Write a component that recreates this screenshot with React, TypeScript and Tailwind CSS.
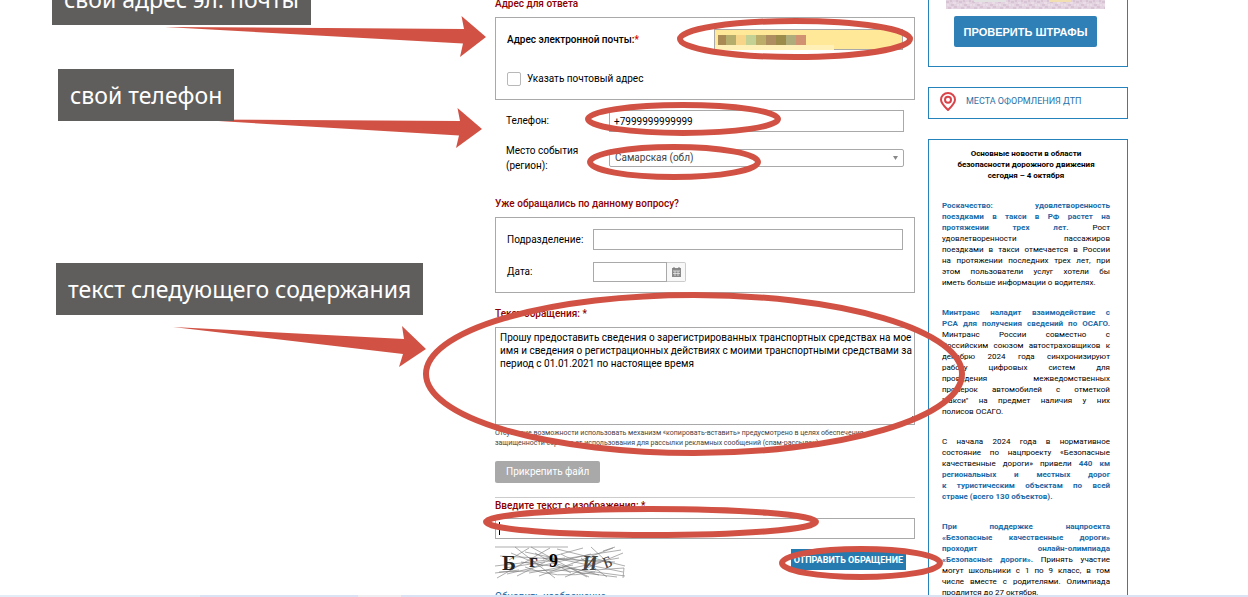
import { useState } from 'react'
import type { ReactNode } from 'react'

const fieldClass = 'border border-[#a9a9a9] bg-white px-1 outline-none'

const pixels = ['#a98a55', '#b5ad6b', '#f6d488', '#c4d194', '#bbac6a', '#ae8e60', '#9c8c4b', '#aeac7b', '#d09271']

const scratches = [
  'M0 1H73', 'M2 32L55 2', 'M20 1L60 32', 'M30 6L128 26', 'M5 10L120 16', 'M10 22L126 4',
  'M12 28L96 8', 'M36 1L92 31', 'M44 30L118 2', 'M0 20L70 12', 'M26 16L130 30', 'M62 3L130 20',
  'M4 26L64 24L122 31', 'M48 13L88 2', 'M54 27L106 16', 'M70 31L128 7', 'M16 7L48 20', 'M34 27L78 19',
  'M86 12L112 31', 'M96 1L110 14', 'M100 24L129 22L128 32', 'M40 7L76 27', 'M22 30L50 16', 'M58 17L104 29',
  'M30 21Q60 34 100 26', 'M66 8Q84 20 124 12', 'M14 14L34 2', 'M0 27L24 24', 'M76 22L94 31', 'M108 5L120 1',
]

const news: { bold: string; text: string; last?: boolean }[][] = [
  [
    { bold: 'Роскачество: удовлетворенность', text: '' },
    { bold: 'поездками в такси в РФ растет на', text: '' },
    { bold: 'протяжении трех лет.', text: ' Рост' },
    { bold: '', text: 'удовлетворенности пассажиров' },
    { bold: '', text: 'поездками в такси отмечается в России' },
    { bold: '', text: 'на протяжении последних трех лет, при' },
    { bold: '', text: 'этом пользователи услуг хотели бы' },
    { bold: '', text: 'иметь больше информации о водителях.', last: true },
  ],
  [
    { bold: 'Минтранс наладит взаимодействие с', text: '' },
    { bold: 'РСА для получения сведений по ОСАГО.', text: '' },
    { bold: '', text: 'Минтранс России совместно с' },
    { bold: '', text: 'Российским союзом автостраховщиков к' },
    { bold: '', text: 'декабрю 2024 года синхронизируют' },
    { bold: '', text: 'работу цифровых систем для' },
    { bold: '', text: 'проведения межведомственных' },
    { bold: '', text: 'проверок автомобилей с отметкой' },
    { bold: '', text: '"такси" на предмет наличия у них' },
    { bold: '', text: 'полисов ОСАГО.', last: true },
  ],
  [
    { bold: '', text: 'С начала 2024 года в нормативное' },
    { bold: '', text: 'состояние по нацпроекту «Безопасные' },
    { bold: '440 км', text: 'качественные дороги» привели ' },
    { bold: 'региональных и местных дорог', text: '' },
    { bold: 'к туристическим объектам по всей', text: '' },
    { bold: 'стране (всего 130 объектов).', text: '', last: true },
  ],
  [
    { bold: 'При поддержке нацпроекта', text: '' },
    { bold: '«Безопасные качественные дороги»', text: '' },
    { bold: 'проходит онлайн-олимпиада', text: '' },
    { bold: '«Безопасные дороги».', text: ' Принять участие' },
    { bold: '', text: 'могут школьники с 1 по 9 класс, в том' },
    { bold: '', text: 'числе вместе с родителями. Олимпиада' },
    { bold: '', text: 'продлится до 27 октября.', last: true },
  ],
]

function Callout({ children }: { children: ReactNode }) {
  return (
    <p className="relative z-10 w-fit whitespace-nowrap bg-[#5f5e5c] px-3 py-2 font-['Noto_Sans',sans-serif] text-[23px] leading-9 text-white">
      {children}
    </p>
  )
}

function Heading({ htmlFor, children }: { htmlFor?: string; children: ReactNode }) {
  return (
    <label htmlFor={htmlFor} className="block font-medium leading-4 text-[#8b0000]">
      {children}
    </label>
  )
}

function Captcha() {
  return (
    <svg width="132" height="34" viewBox="0 0 132 34" role="img" aria-label="Код">
      <g fill="none" stroke="#777" strokeWidth="0.6">
        {scratches.map((d) => (
          <path key={d} d={d} />
        ))}
      </g>
      <g fontFamily="Liberation Serif, serif" fill="#222">
        <text x="7" y="24" fontSize="21" fontWeight="bold">Б</text>
        <text x="34" y="21" fontSize="19" fontWeight="bold">г</text>
        <text x="54" y="21" fontSize="18" fontWeight="bold" fill="#000">9</text>
        <text x="87" y="24" fontSize="20" fontStyle="italic" fontWeight="bold" fill="#444">И</text>
        <text x="108" y="21" fontSize="16" fill="#444" transform="rotate(-20 114 16)">Б</text>
      </g>
    </svg>
  )
}

function Marks() {
  return (
    <svg className="pointer-events-none absolute left-0 top-0" width="1248" height="597" viewBox="0 0 1248 597" aria-hidden="true">
      <g fill="#d15244">
        <path d="M165 27L464 29L461.500 16L486 37L460 57L463 43.500Z" />
        <path d="M193 119.500L460 121L457.500 108L482 129L456 148L459 135.500Z" />
        <path d="M173 327L404 339L402 326L426 349L399 367L403 354Z" />
      </g>
      <g fill="none" stroke="#d15244" strokeWidth="6">
        <ellipse cx="795" cy="39" rx="115" ry="18" />
        <ellipse cx="683" cy="119" rx="95" ry="14" />
        <ellipse cx="674" cy="162" rx="84" ry="15" />
        <ellipse cx="694" cy="374" rx="268" ry="79" />
        <ellipse cx="651" cy="522" rx="165" ry="13" />
        <ellipse cx="861" cy="563" rx="79" ry="14" />
      </g>
    </svg>
  )
}

function RequestForm() {
  const [phone, setPhone] = useState('+7999999999999')
  const [code, setCode] = useState('')
  const [text, setText] = useState(
    'Прошу предоставить сведения о зарегистрированных транспортных средствах на мое\nимя и сведения о регистрационных действиях с моими транспортными средствами за\nпериод с 01.01.2021 по настоящее время'
  )

  return (
    <form className="-mt-1 min-w-0 flex-1" onSubmit={(e) => e.preventDefault()}>
      <Heading>Адрес для ответа</Heading>
      <div className="mt-[5px] border border-[#a9a9a9] px-[11px] pb-3 pt-[11px]">
        <div className="flex items-center justify-between">
          <label htmlFor="email" className="font-medium">
            Адрес электронной почты:<span className="text-[#d00]">*</span>
          </label>
          <div className="relative">
            <input id="email" type="email" className="block h-[21px] w-[189px] border border-[#a9a9a9] bg-[#ffe998] px-1 outline-none" />
            <svg className="absolute left-px top-[5px]" width="120" height="16" aria-hidden="true">
              <rect y="11" width="119" height="5" fill="#fff0b8" />
              {pixels.map((c, i) => (
                <rect key={i} x={i ? 11 + (i - 1) * 10 : 3} y="1" width={i ? 10 : 8} height="10" fill={c} />
              ))}
            </svg>
          </div>
        </div>
        <label className="mt-[21px] flex items-center gap-1.5">
          <input type="checkbox" className="size-3.5 appearance-none rounded-xs border border-[#b8b8b8] bg-white" />
          Указать почтовый адрес
        </label>
      </div>

      <div className="mx-[11px] mt-2.5 flex items-center">
        <label htmlFor="phone" className="w-[103px]">Телефон:</label>
        <input id="phone" value={phone} onChange={(e) => setPhone(e.target.value)} className={`h-[22px] min-w-0 flex-1 ${fieldClass}`} />
      </div>
      <div className="mx-[11px] mt-[11px] flex items-center">
        <label htmlFor="region" className="w-[103px] leading-[15px]">
          Место события<br />(регион):
        </label>
        <div className="relative flex-1">
          <select id="region" className="block h-[18px] w-full appearance-none rounded-xs border border-[#a9a9a9] bg-white px-[5px] text-[#444] outline-none">
            <option>Самарская (обл)</option>
          </select>
          <svg className="absolute right-1.5 top-[7px]" width="5" height="4" aria-hidden="true">
            <path d="M0 0H5L2.500 4Z" fill="#888" />
          </svg>
        </div>
      </div>

      <div className="mt-[23px]">
        <Heading>Уже обращались по данному вопросу?</Heading>
      </div>
      <div className="mt-[5px] border border-[#a9a9a9] px-[11px] pb-2.5 pt-[11px]">
        <div className="flex items-center">
          <label htmlFor="unit" className="w-[86px]">Подразделение:</label>
          <input id="unit" className={`h-[21px] min-w-0 flex-1 ${fieldClass}`} />
        </div>
        <div className="mt-3 flex items-center">
          <label htmlFor="date" className="w-[86px]">Дата:</label>
          <input id="date" className={`h-5 w-[74px] ${fieldClass}`} />
          <button type="button" aria-label="Выбрать дату" className="flex h-5 w-[19px] items-center justify-center rounded-r-xs border border-l-0 border-[#ccc] bg-[#f8f8f8]">
            <svg width="9" height="10" viewBox="0 0 9 10">
              <path d="M0 1H9V10H0Z" fill="#8a8a8a" />
              <path d="M2 0V2M7 0V2" stroke="#777" />
              <path d="M1 4H8M1 6.500H8M3 4V9M6 4V9" stroke="#f0f0f0" strokeWidth="0.7" />
            </svg>
          </button>
        </div>
      </div>

      <div className="mt-[13px]">
        <Heading htmlFor="message">Текст обращения: *</Heading>
      </div>
      <textarea
        id="message"
        value={text}
        onChange={(e) => setText(e.target.value)}
        className="mt-[5px] block h-[98px] w-full resize-y overflow-hidden border border-[#a9a9a9] py-[3px] pl-1 leading-[13px] outline-none"
      />
      <p className="mt-[3px] whitespace-nowrap text-[7px] leading-[10px] text-[#444]">
        Отсутствие возможности использовать механизм «копировать-вставить» предусмотрено в целях обеспечения<br />
        защищенности сервиса от использования для рассылки рекламных сообщений (спам-рассылок).
      </p>
      <button type="button" className="mt-[13px] block h-[22px] rounded-xs bg-[#a9a9a9] px-[11px] text-white">
        Прикрепить файл
      </button>
      <hr className="mt-3.5 border-[#ccc]" />
      <Heading htmlFor="code">Введите текст с изображения: *</Heading>
      <div className="relative mt-1">
        <input id="code" value={code} onChange={(e) => setCode(e.target.value)} className={`block h-[21px] w-full ${fieldClass}`} />
        {!code && <span className="pointer-events-none absolute left-1 top-1 h-[13px] w-px bg-black" />}
      </div>
      <div className="mt-[7px] flex items-start justify-between pr-[9px]">
        <Captcha />
        <button type="submit" className="mt-[3px] h-[21px] bg-[#257bb0] px-[3px] text-[9px] font-bold text-white">
          ОТПРАВИТЬ ОБРАЩЕНИЕ
        </button>
      </div>
      <a href="#" className="mt-[9px] block text-[#1a6aa6]">Обновить изображение</a>
    </form>
  )
}

function Sidebar() {
  return (
    <aside className="w-[200px] shrink-0">
      <div className="border border-t-0 border-[#2582ba] px-[17px] pb-[19px]">
        <svg className="block h-[9px] w-[159px]" aria-hidden="true">
          <defs>
            <pattern id="grain" width="13" height="9" patternUnits="userSpaceOnUse">
              <rect width="13" height="9" fill="#e3d3e0" />
              <path d="M0 2H3M5 5H8M10 1H12M2 8H5M8 7H11M4 1H6" stroke="#cdb4cb" />
              <path d="M1 5H3M7 3H10M11 5H13M6 8H7" stroke="#f1e8ee" />
            </pattern>
          </defs>
          <rect width="159" height="9" fill="url(#grain)" />
          <rect x="28" width="32" height="2" fill="#e2e2e2" />
          <rect x="103" width="22" height="2" fill="#f1dfb2" />
        </svg>
        <button type="button" className="ml-2 mt-[7px] block h-[31px] w-[143px] whitespace-nowrap rounded-xs bg-[#2f80b7] font-['Liberation_Sans',sans-serif] text-[11px] font-bold text-white">
          ПРОВЕРИТЬ ШТРАФЫ
        </button>
      </div>
      <a href="#" className="mt-5 flex h-8 items-center gap-2.5 border border-[#2582ba] pb-1 pl-[11px] text-[9px] text-[#2b72a8]">
        <svg width="16" height="19" viewBox="0 0 16 19" fill="none" stroke="#d9444a" strokeWidth="2">
          <path d="M8 18C5 15 1 11.500 1 7.800A7 6.800 0 0 1 15 7.800C15 11.500 11 15 8 18Z" />
          <circle cx="8" cy="7.800" r="3" />
        </svg>
        МЕСТА ОФОРМЛЕНИЯ ДТП
      </a>
      <div className="mt-5 border border-b-0 border-[#2582ba] pl-[13px] pr-[17px] pt-2 text-[8px] leading-[11px]">
        <h2 className="text-center font-bold">
          Основные новости в области<br />безопасности дорожного движения<br />сегодня – 4 октября
        </h2>
        <div className="mt-[19px] flex flex-col gap-[19px]">
          {news.map((lines, i) => (
            <p key={i}>
              {lines.map(({ bold, text, last }) => {
                const strong = bold && <b className="font-bold text-[#1a6aa6]">{bold}</b>
                return (
                  <span key={bold + text} className={last ? 'block' : 'block text-justify [text-align-last:justify]'}>
                    {text.endsWith(' ') ? <>{text}{strong}</> : <>{strong}{text}</>}
                  </span>
                )
              })}
            </p>
          ))}
        </div>
      </div>
    </aside>
  )
}

export default function App() {
  return (
    <div className="relative flex h-screen flex-col overflow-hidden bg-white font-[Roboto,sans-serif] text-[10px] leading-4 text-black">
      <main className="flex min-h-0 flex-1 overflow-hidden pr-[120px]">
        <section className="w-[495px] shrink-0 pl-[52px]">
          <div className="-mt-[27px]">
            <Callout>свой адрес эл. почты</Callout>
          </div>
          <div className="ml-1.5 mt-11">
            <Callout>свой телефон</Callout>
          </div>
          <div className="ml-1 mt-[142px]">
            <Callout>текст следующего содержания</Callout>
          </div>
        </section>
        <RequestForm />
        <div className="ml-[13px] flex">
          <Sidebar />
        </div>
      </main>
      <footer className="flex h-0.5 shrink-0 bg-[#dae3f4]">
        <div className="w-[200px] bg-[#e2edf8]" />
        <div className="ml-[158px] w-[43px] bg-[#eeeef2]" />
      </footer>
      <Marks />
    </div>
  )
}
